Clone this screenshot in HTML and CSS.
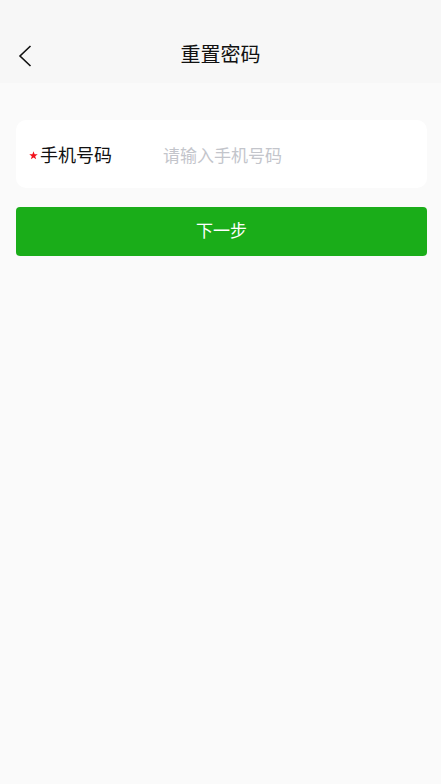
FILE: index.html
```html
<!DOCTYPE html>
<html lang="zh-CN">
<head>
<meta charset="utf-8">
<title>重置密码</title>
<link rel="stylesheet" href="styles.css">
</head>
<body>
<div class="page">
  <header class="navbar">
    <div class="back">
      <svg width="14" height="22" viewBox="0 0 14 22"><path d="M12.5 1 L2 11 L12.5 21" fill="none" stroke="#111" stroke-width="1.6"/></svg>
    </div>
    <div class="title">重置密码</div>
  </header>
  <main class="content">
    <div class="card">
      <div class="field">
        <span class="label"><svg class="star" width="9" height="9" viewBox="0 0 10 10"><path d="M5 0.3 L6.2 3.6 L9.7 3.7 L6.9 5.8 L7.9 9.2 L5 7.2 L2.1 9.2 L3.1 5.8 L0.3 3.7 L3.8 3.6 Z" fill="#f2111b"/></svg>手机号码</span>
        <input class="input" type="tel" placeholder="请输入手机号码">
      </div>
    </div>
    <button class="btn">下一步</button>
  </main>
</div>
</body>
</html>
```
FILE: styles.css
```css
* { box-sizing: border-box; }
html, body { margin: 0; padding: 0; }
body {
  background: #fafafa;
  font-family: "Noto Sans CJK SC", "Noto Sans", sans-serif;
  color: #111;
}
.page { width: 441px; min-height: 784px; }
.navbar {
  height: 83px;
  background: #f7f7f7;
  position: relative;
  display: flex;
  align-items: flex-end;
  justify-content: center;
  padding-bottom: 15px;
}
.back {
  position: absolute;
  left: 18px;
  top: 45px;
  width: 14px;
  height: 22px;
  display: flex;
}
.title {
  font-size: 20px;
  line-height: 28px;
  color: #111;
}
.content {
  padding: 37px 14px 0 16px;
  display: flex;
  flex-direction: column;
  gap: 19px;
}
.card {
  background: #fff;
  border-radius: 10px;
  height: 68px;
  display: flex;
  align-items: center;
  padding: 0 12px 0 13px;
}
.field { display: flex; align-items: center; width: 100%; }
.label {
  width: 134px;
  font-size: 18px;
  line-height: 26px;
  color: #111;
  display: flex;
  align-items: center;
  flex-shrink: 0;
}
.star {
  flex-shrink: 0;
  margin-right: 2px;
  position: relative;
  top: 1px;
}
.input {
  flex: 1;
  border: none;
  outline: none;
  background: transparent;
  font-family: "Noto Sans CJK SC", "Noto Sans", sans-serif;
  font-size: 17px;
  padding: 0;
  color: #111;
  min-width: 0;
}
.input::placeholder { color: #c3c5cb; }
.btn {
  height: 49px;
  border: none;
  border-radius: 4px;
  background: #1aad19;
  color: #fff;
  font-family: "Noto Sans CJK SC", "Noto Sans", sans-serif;
  font-size: 17px;
  padding: 0 0 4px;
  width: 100%;
}
```
